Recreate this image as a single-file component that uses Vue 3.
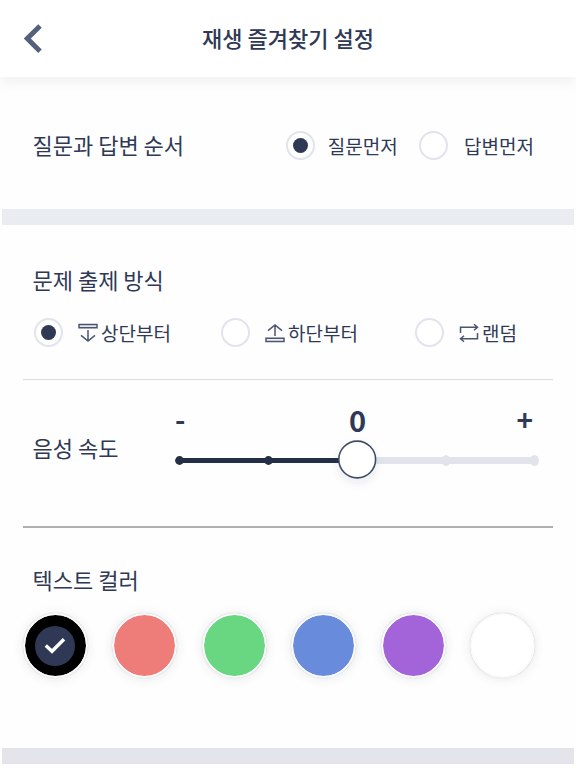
<script setup>
import { ref } from 'vue'

const order = ref('question')
const orders = [
  { id: 'question', label: '질문먼저' },
  { id: 'answer', label: '답변먼저' },
]
const mode = ref('top')
const modes = [
  { id: 'top', label: '상단부터' },
  { id: 'bottom', label: '하단부터' },
  { id: 'random', label: '랜덤' },
]
const color = ref('#000000')
const colors = ['#000000', '#ee7c78', '#69d681', '#698bdb', '#a364d9', '#ffffff']
</script>

<template>
  <main class="screen">
    <header class="header">
      <button class="back" aria-label="back">
        <svg width="20" height="30" viewBox="0 0 20 30">
          <path d="M16 2 L3.3 14.6 L16 27.2" fill="none" stroke="#53617d" stroke-width="5" />
        </svg>
      </button>
      <h1>재생 즐겨찾기 설정</h1>
    </header>

    <section class="order">
      <h2>질문과 답변 순서</h2>
      <div class="order-options">
        <label v-for="o in orders" :key="o.id" class="option" @click="order = o.id">
          <span class="radio"><i v-if="order === o.id" /></span>
          <span class="label">{{ o.label }}</span>
        </label>
      </div>
    </section>

    <div class="band" />

    <section class="mode">
      <h2>문제 출제 방식</h2>
      <div class="mode-options">
        <label v-for="m in modes" :key="m.id" class="option" @click="mode = m.id">
          <span class="radio"><i v-if="mode === m.id" /></span>
          <svg class="icon" width="20" height="20" viewBox="0 0 20 20" fill="none" stroke="#4b556f" stroke-width="1.5">
            <template v-if="m.id === 'top'">
              <path d="M1 1.5H19V4.8H1Z" fill="#e6eaee" />
              <path d="M10 7V18 M3 12.4L10 18L17 12.4" />
            </template>
            <template v-else-if="m.id === 'bottom'">
              <path d="M1 15.2H19V18.5H1Z" fill="#eef0f4" />
              <path d="M10 13V2 M3 7.6L10 2L17 7.6" />
            </template>
            <template v-else>
              <path d="M1.5 10V4.2H18.5 M15 1.2L18.5 4.2L15 7.2 M18.5 10V15.8H1.5 M5 12.8L1.5 15.8L5 18.8" />
            </template>
          </svg>
          <span class="label">{{ m.label }}</span>
        </label>
      </div>
    </section>

    <section class="speed">
      <h2>음성 속도</h2>
      <div class="slider">
        <div class="scale"><span>-</span><span class="value">0</span><span class="plus">+</span></div>
        <svg width="380" height="60" viewBox="0 0 380 60">
          <defs>
            <filter id="thumb-shadow" x="-40%" y="-40%" width="180%" height="180%">
              <feDropShadow dx="0" dy="4" stdDeviation="4" flood-color="#24304a" flood-opacity=".09" />
            </filter>
          </defs>
          <path d="M187 25.5H364" stroke="#e1e4eb" stroke-width="7" />
          <ellipse cx="276" cy="25.5" rx="4.2" ry="5.5" fill="#e1e4eb" />
          <ellipse cx="364.5" cy="25.5" rx="4.5" ry="5.5" fill="#e1e4eb" />
          <path d="M9.5 25.5H187" stroke="#242e47" stroke-width="5.2" />
          <circle cx="9.5" cy="25.5" r="4.4" fill="#242e47" />
          <circle cx="98.5" cy="25.5" r="4.4" fill="#242e47" />
          <circle cx="187.2" cy="24.5" r="18.4" fill="#fff" stroke="#414c66" stroke-width="1.6" filter="url(#thumb-shadow)" />
        </svg>
      </div>
    </section>

    <section class="colors">
      <h2>텍스트 컬러</h2>
      <div class="swatches">
        <button v-for="c in colors" :key="c" class="swatch" :style="{ backgroundColor: c }" @click="color = c">
          <span v-if="color === c" class="picked">
            <svg width="22" height="18" viewBox="0 0 22 18">
              <path d="M1.8 8.5L8 14.3L20 2.3" fill="none" stroke="#fff" stroke-width="3.4" />
            </svg>
          </span>
        </button>
      </div>
    </section>

    <div class="band bottom" />
  </main>
</template>

<style>
body {
  margin: 0;
  background: #fefefe;
}
</style>

<style scoped>
* {
  box-sizing: border-box;
}
.screen {
  width: 576px;
  height: 768px;
  overflow: hidden;
  background: #fefefe;
  color: #2f3956;
  font-family: "Noto Sans CJK KR", sans-serif;
}
button {
  padding: 0;
  border: 0;
  background: none;
}
h1,
h2 {
  margin: 0;
  font-size: 22px;
  line-height: 32px;
  font-weight: 400;
  white-space: nowrap;
}
.header {
  display: grid;
  grid-template-columns: 60px 1fr 60px;
  align-items: center;
  height: 77px;
  background: #fff;
  box-shadow: 0 5px 12px rgba(0, 0, 0, 0.06);
}
.header h1 {
  padding-bottom: 3px;
  font-weight: 500;
  text-align: center;
}
.back {
  display: flex;
  padding-left: 23.5px;
}
.order {
  display: flex;
  align-items: flex-start;
  justify-content: space-between;
  height: 132px;
  padding: 51px 42px 0 32.5px;
}
.order-options {
  display: flex;
  gap: 21px;
  padding-top: 3px;
}
.option {
  display: flex;
  align-items: center;
  height: 29px;
}
.radio {
  display: flex;
  align-items: center;
  justify-content: center;
  flex: none;
  width: 29px;
  height: 29px;
  border: 2px solid #e1e4ed;
  border-radius: 50%;
  background: #fff;
}
.radio i {
  width: 15px;
  height: 15px;
  border-radius: 50%;
  background: #2f3956;
}
.label {
  font-size: 19px;
  line-height: 28px;
  white-space: nowrap;
}
.order-options .label {
  margin-left: 13px;
}
.order-options .option:last-child .label {
  margin-left: 16.4px;
}
.band {
  height: 16px;
  margin: 0 2px;
  background: #e9ecf1;
}
.mode {
  height: 155px;
  margin: 0 23px;
  padding: 38px 0 0 9.5px;
  border-bottom: 1px solid #dcdcde;
}
.mode-options {
  display: grid;
  grid-template-columns: 187px 194px 1fr;
  margin: 23px 0 0 1.5px;
}
.icon {
  margin: 0 3px 0 15px;
}
.speed {
  display: flex;
  height: 148px;
  margin: 0 23px;
  padding-left: 9.5px;
  border-bottom: 2px solid #b0b0b2;
}
.speed h2 {
  width: 137.5px;
  padding-top: 51px;
}
.slider {
  width: 380px;
  padding-top: 18px;
}
.scale {
  display: grid;
  grid-template-columns: 1fr 1fr 1fr;
  height: 37px;
  padding: 0 17px 0 5px;
  font-size: 28px;
  font-weight: 700;
  line-height: 42px;
}
.value {
  padding-left: 7px;
  font-size: 29px;
  text-align: center;
}
.plus {
  text-align: right;
}
.slider svg {
  display: block;
}
.colors {
  height: 220px;
  padding: 35px 0 0 22.5px;
}
.colors h2 {
  padding-left: 10px;
}
.swatches {
  display: flex;
  gap: 24.5px;
  margin-top: 18px;
}
.swatch {
  display: flex;
  align-items: center;
  justify-content: center;
  width: 65px;
  height: 65px;
  border: 2px solid #fafafc;
  border-radius: 50%;
  background-clip: padding-box;
  box-shadow: 0 0 1px rgba(30, 40, 70, 0.3), 0 1px 11px rgba(30, 50, 50, 0.1);
}
.picked {
  display: flex;
  align-items: center;
  justify-content: center;
  width: 40px;
  height: 40px;
  border-radius: 50%;
  background: #2f3956;
}
.bottom {
  background: #e4e5ea;
}
</style>
